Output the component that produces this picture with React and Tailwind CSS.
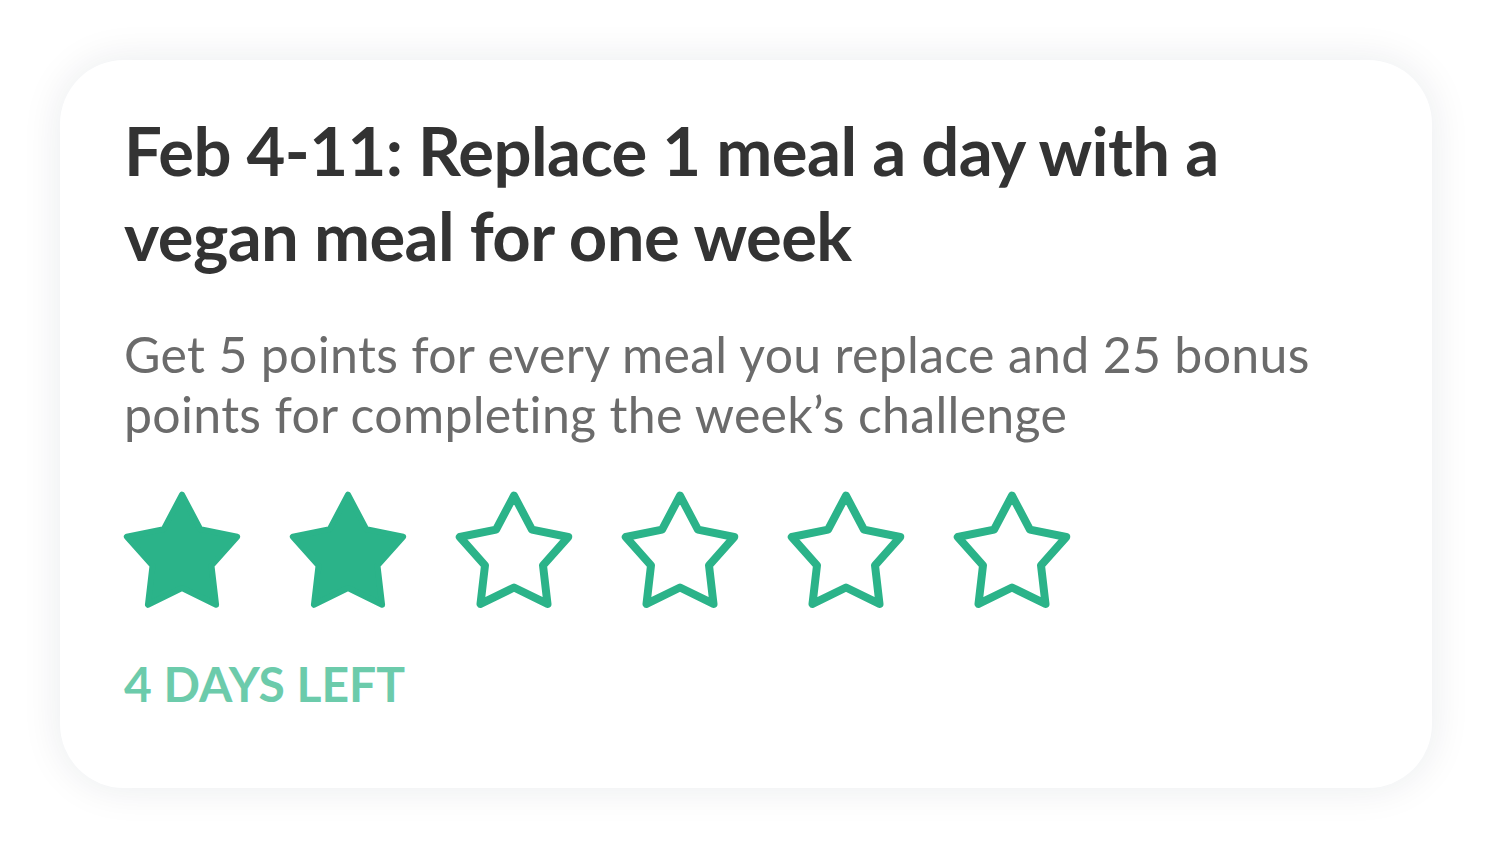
import React from "react";

// star points, center (58, 63.5), stretched a little vertically
function starPoints(R, r) {
  const pts = [];
  for (let i = 0; i < 10; i++) {
    const rad = i % 2 === 0 ? R : r;
    const a = ((-90 + i * 36) * Math.PI) / 180;
    pts.push(`${(58 + rad * Math.cos(a)).toFixed(2)},${(63.5 + rad * 1.05 * Math.sin(a)).toFixed(2)}`);
  }
  return pts.join(" ");
}

function Star({ filled }) {
  return (
    <svg width="116" height="116" viewBox="0 0 116 116" className="shrink-0 overflow-visible">
      {filled ? (
        <polygon points={starPoints(58, 31)} fill="#2bb389" stroke="#2bb389" strokeWidth="6" strokeLinejoin="round" />
      ) : (
        <polygon points={starPoints(57, 30.5)} fill="none" stroke="#2bb389" strokeWidth="8" strokeLinejoin="round" />
      )}
    </svg>
  );
}

export default function App() {
  const stars = [true, true, false, false, false, false];

  return (
    <div className="w-[1492px] h-[848px] bg-white p-[60px] font-['Lato',sans-serif]">
      <div className="w-[1372px] h-[728px] bg-white rounded-[64px] shadow-[0_0_40px_rgba(20,30,60,0.09)] pl-[64px] pr-[64px] pt-[48px]">
        <h1 className="text-[67px] leading-[85px] font-bold tracking-[-0.6px] text-[#333333]">
          Feb 4-11: Replace 1 meal a day with a vegan meal for one week
        </h1>
        <p className="mt-[46px] text-[50px] leading-[60px] tracking-[0.3px] text-[#6b6b6b]">
          Get 5 points for every meal you replace and 25 bonus points for completing the week’s challenge
        </p>
        <div className="mt-[48px] flex gap-[50px]">
          {stars.map((f, i) => (
            <Star key={i} filled={f} />
          ))}
        </div>
        <div className="mt-[46px] text-[48px] leading-[60px] font-bold text-[#6ccbab]">4 DAYS LEFT</div>
      </div>
    </div>
  );
}
